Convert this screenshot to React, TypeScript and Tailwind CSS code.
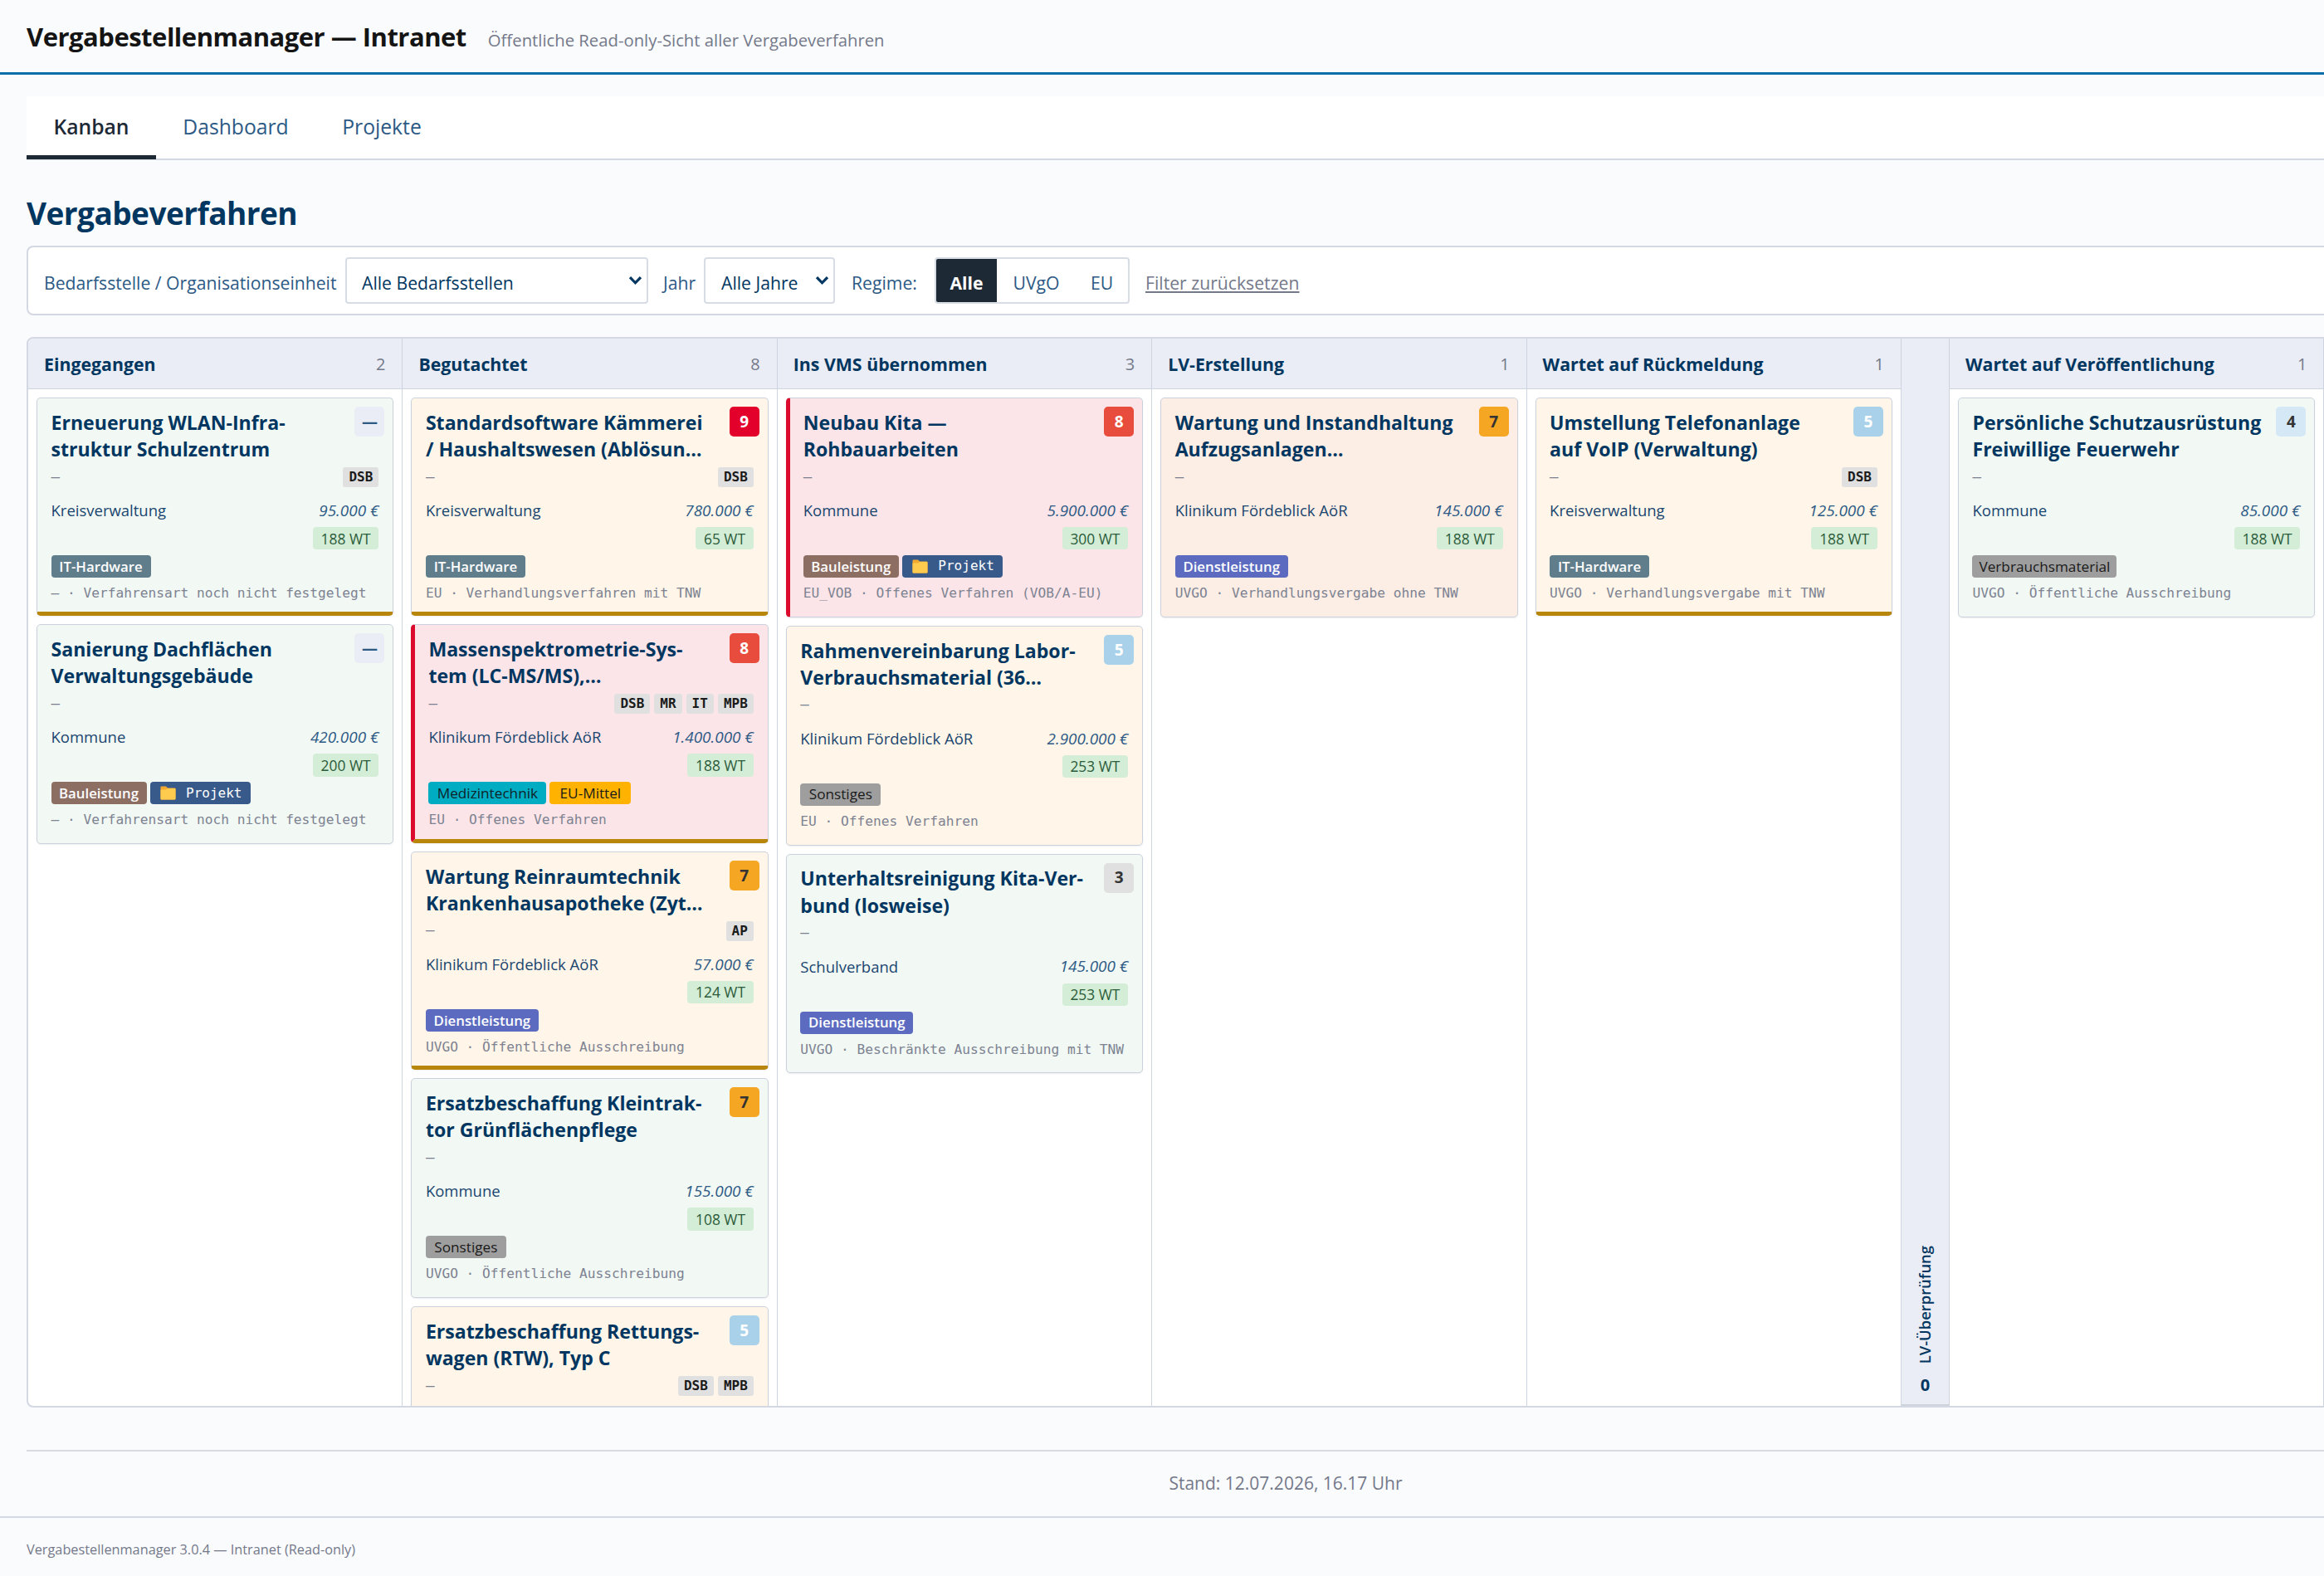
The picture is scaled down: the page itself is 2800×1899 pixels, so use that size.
import { clsx } from "clsx";

type Tone = "green" | "cream" | "rose" | "peach";
type TagKind = "it" | "bau" | "dienst" | "medizin" | "eu" | "sonstiges" | "material";

interface Verfahren {
  title: string[];
  score: string;
  tone: Tone;
  due?: boolean;
  checks?: string[];
  unit?: string;
  amount?: string;
  days?: string;
  tags?: TagKind[];
  project?: boolean;
  procedure?: string;
}

interface Column {
  name: string;
  count: number;
  collapsed?: boolean;
  items: Verfahren[];
}

const columns: Column[] = [
  {
    name: "Eingegangen",
    count: 2,
    items: [
      {
        title: ["Erneuerung WLAN-Infra-", "struktur Schulzentrum"],
        score: "—",
        tone: "green",
        due: true,
        checks: ["DSB"],
        unit: "Kreisverwaltung",
        amount: "95.000 €",
        days: "188 WT",
        tags: ["it"],
        procedure: "— · Verfahrensart noch nicht festgelegt",
      },
      {
        title: ["Sanierung Dachflächen", "Verwaltungsgebäude"],
        score: "—",
        tone: "green",
        unit: "Kommune",
        amount: "420.000 €",
        days: "200 WT",
        tags: ["bau"],
        project: true,
        procedure: "— · Verfahrensart noch nicht festgelegt",
      },
    ],
  },
  {
    name: "Begutachtet",
    count: 8,
    items: [
      {
        title: ["Standardsoftware Kämmerei", "/ Haushaltswesen (Ablösun…"],
        score: "9",
        tone: "cream",
        due: true,
        checks: ["DSB"],
        unit: "Kreisverwaltung",
        amount: "780.000 €",
        days: "65 WT",
        tags: ["it"],
        procedure: "EU · Verhandlungsverfahren mit TNW",
      },
      {
        title: ["Massenspektrometrie-Sys-", "tem (LC-MS/MS),…"],
        score: "8",
        tone: "rose",
        due: true,
        checks: ["DSB", "MR", "IT", "MPB"],
        unit: "Klinikum Fördeblick AöR",
        amount: "1.400.000 €",
        days: "188 WT",
        tags: ["medizin", "eu"],
        procedure: "EU · Offenes Verfahren",
      },
      {
        title: ["Wartung Reinraumtechnik", "Krankenhausapotheke (Zyt…"],
        score: "7",
        tone: "cream",
        due: true,
        checks: ["AP"],
        unit: "Klinikum Fördeblick AöR",
        amount: "57.000 €",
        days: "124 WT",
        tags: ["dienst"],
        procedure: "UVGO · Öffentliche Ausschreibung",
      },
      {
        title: ["Ersatzbeschaffung Kleintrak-", "tor Grünflächenpflege"],
        score: "7",
        tone: "green",
        unit: "Kommune",
        amount: "155.000 €",
        days: "108 WT",
        tags: ["sonstiges"],
        procedure: "UVGO · Öffentliche Ausschreibung",
      },
      {
        title: ["Ersatzbeschaffung Rettungs-", "wagen (RTW), Typ C"],
        score: "5",
        tone: "cream",
        checks: ["DSB", "MPB"],
      },
    ],
  },
  {
    name: "Ins VMS übernommen",
    count: 3,
    items: [
      {
        title: ["Neubau Kita —", "Rohbauarbeiten"],
        score: "8",
        tone: "rose",
        unit: "Kommune",
        amount: "5.900.000 €",
        days: "300 WT",
        tags: ["bau"],
        project: true,
        procedure: "EU_VOB · Offenes Verfahren (VOB/A-EU)",
      },
      {
        title: ["Rahmenvereinbarung Labor-", "Verbrauchsmaterial (36…"],
        score: "5",
        tone: "cream",
        unit: "Klinikum Fördeblick AöR",
        amount: "2.900.000 €",
        days: "253 WT",
        tags: ["sonstiges"],
        procedure: "EU · Offenes Verfahren",
      },
      {
        title: ["Unterhaltsreinigung Kita-Ver-", "bund (losweise)"],
        score: "3",
        tone: "green",
        unit: "Schulverband",
        amount: "145.000 €",
        days: "253 WT",
        tags: ["dienst"],
        procedure: "UVGO · Beschränkte Ausschreibung mit TNW",
      },
    ],
  },
  {
    name: "LV-Erstellung",
    count: 1,
    items: [
      {
        title: ["Wartung und Instandhaltung", "Aufzugsanlagen…"],
        score: "7",
        tone: "peach",
        unit: "Klinikum Fördeblick AöR",
        amount: "145.000 €",
        days: "188 WT",
        tags: ["dienst"],
        procedure: "UVGO · Verhandlungsvergabe ohne TNW",
      },
    ],
  },
  {
    name: "Wartet auf Rückmeldung",
    count: 1,
    items: [
      {
        title: ["Umstellung Telefonanlage", "auf VoIP (Verwaltung)"],
        score: "5",
        tone: "cream",
        due: true,
        checks: ["DSB"],
        unit: "Kreisverwaltung",
        amount: "125.000 €",
        days: "188 WT",
        tags: ["it"],
        procedure: "UVGO · Verhandlungsvergabe mit TNW",
      },
    ],
  },
  { name: "LV-Überprüfung", count: 0, collapsed: true, items: [] },
  {
    name: "Wartet auf Veröffentlichung",
    count: 1,
    items: [
      {
        title: ["Persönliche Schutzausrüstung", "Freiwillige Feuerwehr"],
        score: "4",
        tone: "green",
        unit: "Kommune",
        amount: "85.000 €",
        days: "188 WT",
        tags: ["material"],
        procedure: "UVGO · Öffentliche Ausschreibung",
      },
    ],
  },
];

const tones: Record<Tone, string> = {
  green: "bg-[#f2f8f4]",
  cream: "bg-[#fff5e8]",
  rose: "bg-[#fce5e8]",
  peach: "bg-[#fcede5]",
};

const scores: Record<string, string> = {
  "—": "bg-[#eaedf5] text-[#2c5a85]",
  "9": "bg-[#e3002b] text-white",
  "8": "bg-[#e74c3c] text-white",
  "7": "bg-[#f5a623] text-[#333]",
  "5": "bg-[#a9d2ea] text-white",
  "4": "bg-[#d4e8f5] text-[#333]",
  "3": "bg-[#e0e0e0] text-[#333]",
};

const tagStyles: Record<TagKind, { label: string; className: string }> = {
  it: { label: "IT-Hardware", className: "w-[120px] bg-[#607d8b] text-[16.8px] font-semibold text-white" },
  bau: { label: "Bauleistung", className: "w-[115px] bg-[#8d6e63] text-[16.8px] font-semibold text-white" },
  dienst: { label: "Dienstleistung", className: "w-[136px] bg-[#5c6bc0] text-[16.8px] font-semibold text-white" },
  medizin: { label: "Medizintechnik", className: "w-[142px] bg-[#00acc1] text-[17.2px] text-[#10222b]" },
  eu: { label: "EU-Mittel", className: "w-[98px] bg-[#ffb300] text-[17.2px] text-[#1a1a1a]" },
  sonstiges: { label: "Sonstiges", className: "w-[97px] bg-[#9e9e9e] text-[17.2px] text-[#1a1a1a]" },
  material: { label: "Verbrauchsmaterial", className: "w-[174px] bg-[#9e9e9e] text-[17.2px] text-[#1a1a1a]" },
};

const mono = "font-['DejaVu_Sans_Mono','Liberation_Mono',monospace]";

function FolderIcon() {
  return (
    <svg width="19" height="17" viewBox="0 0 19 17" fill="none">
      <path d="M0.5 1.5Q0.5 0.5 1.5 0.5H7L9 2.6H17.5Q18.5 2.6 18.5 3.6V15.5Q18.5 16.5 17.5 16.5H1.5Q0.5 16.5 0.5 15.5Z" fill="#f3a92f" />
      <path d="M0.5 4.4H6.8L9 2.9H17.6Q18.5 2.9 18.5 3.9V15.5Q18.5 16.5 17.5 16.5H1.5Q0.5 16.5 0.5 15.5Z" fill="#ffcb4f" />
    </svg>
  );
}

function Chevron() {
  return (
    <svg width="17" height="12" viewBox="0 0 17 12" fill="none">
      <path d="M2 2.2L8.5 8.8L15 2.2" stroke="#003660" strokeWidth="3.2" />
    </svg>
  );
}

function Card({ item }: { item: Verfahren }) {
  const urgent = item.tone === "rose";

  return (
    <article
      className={clsx(
        "relative shrink-0 rounded-[5px] border border-[#ccd2dd] pr-[17px] pt-[12.8px] shadow-[0_1px_2px_rgba(0,0,0,0.07)]",
        tones[item.tone],
        urgent ? "border-l-[5px] border-l-[#dc0a2d] pl-4" : "pl-[16.5px]",
        item.due ? "h-[263.4px] border-b-[5px] border-b-[#b8860b]" : "h-[264.8px]",
      )}
    >
      <span
        className={clsx(
          "absolute right-2.5 top-2.5 flex h-9 w-9 items-center justify-center rounded-[5px] text-[19px] font-bold",
          scores[item.score],
        )}
      >
        {item.score}
      </span>
      <h3 className="h-[65px] whitespace-nowrap text-[23.1px] font-bold leading-[32.2px] text-[#003660]">
        {item.title.map((line) => (
          <span key={line} className="block">
            {line}
          </span>
        ))}
      </h3>
      <div className="mt-[5px] flex h-6 items-center justify-between">
        <span className={clsx(mono, "text-[17.5px] text-[#7a8090]")}>—</span>
        <div className={clsx(mono, "flex gap-[5px]")}>
          {item.checks?.map((check) => (
            <span
              key={check}
              className="flex h-6 items-center rounded-[3px] bg-[#e0e0e0] px-[7px] text-[16px] font-bold text-[#1a1a1a]"
            >
              {check}
            </span>
          ))}
        </div>
      </div>
      {item.unit && (
        <div className="mt-[14.6px] flex h-[27px] items-center justify-between whitespace-nowrap">
          <span className="text-[18.5px] text-[#1a466f]">{item.unit}</span>
          <span className="text-[18.9px] italic text-[#2c5a85]">{item.amount}</span>
        </div>
      )}
      {item.days && (
        <div className="mt-[6.6px] flex justify-end">
          <span className="flex h-[27.5px] items-center rounded-[4px] bg-[#d4edd6] px-[9.8px] text-[17.4px] text-[#2a5b3a]">
            {item.days}
          </span>
        </div>
      )}
      <div className="mt-[6.5px] flex h-[27px] gap-1">
        {item.tags?.map((tag) => (
          <span
            key={tag}
            className={clsx(
              "flex items-center justify-center whitespace-nowrap rounded-[4px]",
              tagStyles[tag].className,
            )}
          >
            {tagStyles[tag].label}
          </span>
        ))}
        {item.project && (
          <span
            className={clsx(
              mono,
              "flex w-[121px] items-center justify-between rounded-[4px] bg-[#385a8a] pl-[12px] pr-[10px] text-[16px] text-white",
            )}
          >
            <FolderIcon />
            Projekt
          </span>
        )}
      </div>
      <p className={clsx(mono, "mt-2 whitespace-nowrap text-[16.2px] leading-[22px] text-[#7d8392]")}>
        {item.procedure}
      </p>
    </article>
  );
}

function BoardColumn({ column }: { column: Column }) {
  if (column.collapsed) {
    return (
      <section className="flex w-[58px] shrink-0 flex-col items-center justify-end border-b-2 border-r border-[#ced3dc] bg-[#eaedf5] pb-[9px] text-[#003660]">
        <h2 className="rotate-180 text-[18.4px] font-semibold leading-7 [writing-mode:vertical-rl]">
          {column.name}
        </h2>
        <span className="mt-3 text-[20px] font-bold leading-7">{column.count}</span>
      </section>
    );
  }

  return (
    <section className="flex w-[451.4px] shrink-0 flex-col border-r border-[#ced4e0]">
      <header className="flex h-[61px] shrink-0 items-center justify-between border-b border-[#ced4e0] bg-[#eaedf5] pl-[19px] pr-5 pt-px">
        <h2 className="whitespace-nowrap text-[21.3px] font-bold text-[#003660]">{column.name}</h2>
        <span className="text-[20px] text-[#74798a]">{column.count}</span>
      </header>
      <div className="flex flex-col gap-2.5 px-2.5 pt-2.5">
        {column.items.map((item) => (
          <Card key={item.title[0]} item={item} />
        ))}
      </div>
    </section>
  );
}

export default function App() {
  return (
    <div className="h-[1899px] w-[2800px] overflow-hidden bg-[#fafbfd] font-['Open_Sans','Noto_Sans',sans-serif] text-[#003660]">
      <header className="flex h-[90px] items-baseline gap-[26px] border-b-[3px] border-[#0a6ea8] pl-8 pt-[21px]">
        <span className="whitespace-nowrap text-[31px] font-bold leading-[46px] tracking-[-0.5px] text-[#141414]">
          Vergabestellenmanager — Intranet
        </span>
        <span className="whitespace-nowrap text-[20.3px] text-[#74798a]">
          Öffentliche Read-only-Sicht aller Vergabeverfahren
        </span>
      </header>

      <div className="ml-8 w-[3034px]">
        <nav className="mt-[26px] flex h-[77px] border-b-2 border-[#d3d8e2] bg-white text-[24.7px] text-[#2c5a85]">
          <a className="flex h-[76px] w-[156px] items-center justify-center border-b-[5px] border-[#1e2936] pt-0.5 font-semibold text-[#1e2936]">
            Kanban
          </a>
          <a className="flex w-[192px] items-center justify-center pb-0.5">Dashboard</a>
          <a className="flex w-[160px] items-center justify-center pb-0.5">Projekte</a>
        </nav>

        <h1 className="mt-[38px] h-[65px] text-[37px] font-bold leading-[52px] tracking-[-0.55px]">
          Vergabeverfahren
        </h1>

        <div className="flex h-[84px] items-center whitespace-nowrap rounded-lg border-2 border-[#d3d8e2] bg-white pl-[19px] text-[21.2px] text-[#2c5a85]">
          <span className="w-[363px] pt-[5px]">Bedarfsstelle / Organisationseinheit</span>
          <div className="flex h-14 w-[365px] items-center justify-between rounded-[4px] border-2 border-[#d8dce5] bg-white pl-[18px] pr-[5px] text-[#003660]">
            <span className="pt-[5px]">Alle Bedarfsstellen</span>
            <Chevron />
          </div>
          <span className="ml-[18px] w-[49px] pt-[5px]">Jahr</span>
          <div className="flex h-14 w-[158px] items-center justify-between rounded-[4px] border-2 border-[#d8dce5] bg-white pl-[19px] pr-[5px] text-[#003660]">
            <span className="pt-[5px]">Alle Jahre</span>
            <Chevron />
          </div>
          <span className="ml-5 w-[100px] pt-[5px]">Regime:</span>
          <div className="flex h-14 w-[235px] overflow-hidden rounded-[4px] border-2 border-[#d8dce5]">
            <span className="flex w-[73px] items-center justify-center bg-[#1e2936] pt-[5px] font-bold text-white">
              Alle
            </span>
            <span className="flex w-[95px] items-center justify-center pt-[5px]">UVgO</span>
            <span className="flex flex-1 items-center justify-center pt-[5px]">EU</span>
          </div>
          <span className="ml-[19px] pt-[5px] text-[#74798a] underline">Filter zurücksetzen</span>
        </div>

        <main className="mt-[26px] flex h-[1290px] overflow-hidden rounded-lg border-2 border-[#d3d8e2] bg-white">
          {columns.map((column) => (
            <BoardColumn key={column.name} column={column} />
          ))}
        </main>

        <p className="mt-[51px] h-[80px] border-t-2 border-[#d8dbe2] pt-[20px] text-center text-[21px] leading-[36px] text-[#74798a]">
          Stand: 12.07.2026, 16.17 Uhr
        </p>
      </div>

      <footer className="border-t-2 border-[#d3dae4] pl-8 pt-[24px] text-[16.3px] leading-[28px] text-[#74798a]">
        Vergabestellenmanager 3.0.4 — Intranet (Read-only)
      </footer>
    </div>
  );
}
